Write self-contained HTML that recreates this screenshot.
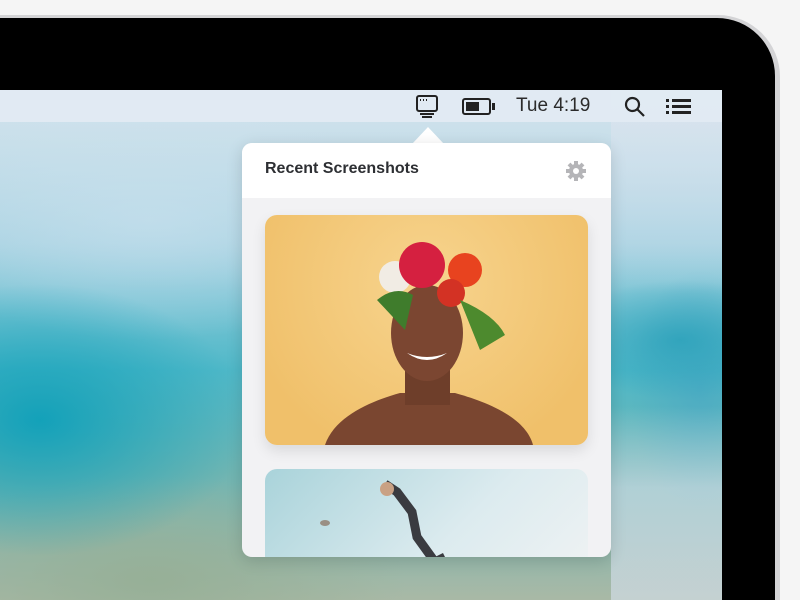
<!DOCTYPE html>
<html><head><meta charset="utf-8"><style>
*{margin:0;padding:0;box-sizing:border-box}
html,body{width:800px;height:600px;overflow:hidden}
body{background:#f5f5f5;position:relative;font-family:"Liberation Sans",sans-serif}
.rim{position:absolute;left:-40px;top:15px;width:820px;height:600px;border-radius:0 62px 0 0;background:#d4d4d6}
.bezel{position:absolute;left:-40px;top:18px;width:815px;height:600px;border-radius:0 58px 0 0;background:#000}
.screen{position:absolute;left:0;top:90px;width:722px;height:510px;overflow:hidden;
background:
radial-gradient(ellipse 120px 60px at 680px 250px,rgba(40,160,185,.8),transparent),
radial-gradient(ellipse 70px 120px at 700px 300px,rgba(70,165,195,.6),transparent),
radial-gradient(ellipse 260px 170px at 40px 330px,rgba(15,160,185,.95),transparent 80%),
radial-gradient(ellipse 320px 130px at 150px 490px,rgba(150,175,150,.95),transparent 80%),
radial-gradient(ellipse 260px 120px at 150px 130px,rgba(190,220,235,.8),transparent),
linear-gradient(180deg,#c4dce8 0%,#9fcfdf 30%,#4fb8c8 55%,#6fb5b2 75%,#a9b9a6 100%)}
.top{position:absolute;left:0;top:0;width:722px;height:200px;background:linear-gradient(180deg,rgba(220,232,240,.6),transparent)}
.right{position:absolute;left:611px;top:0;width:111px;height:510px;background:linear-gradient(180deg,rgba(225,230,240,.6) 0%,rgba(200,220,235,.3) 30%,transparent 40%,transparent 62%,rgba(215,225,238,.6) 78%)}
.menubar{position:absolute;left:0;top:0;width:722px;height:32px;background:rgba(225,234,243,.97)}
.time{position:absolute;left:516px;top:5px;font-size:19px;color:#2b2b2b}
.pop{position:absolute;left:242px;top:143px;width:369px;height:414px;border-radius:10px;background:#f2f2f4;overflow:hidden;box-shadow:0 4px 16px rgba(0,0,0,.15)}
.head{height:55px;background:#fff;position:relative}
.head span{position:absolute;left:23px;top:17px;font-size:16px;font-weight:bold;color:#2d2f33}
.arrow{position:absolute;left:412px;top:127px;width:0;height:0;border-left:16px solid transparent;border-right:16px solid transparent;border-bottom:17px solid #fff}
.img1{position:absolute;left:23px;top:72px;width:323px;height:230px;border-radius:12px;overflow:hidden;background:radial-gradient(ellipse at 50% 30%,#f7d48e,#f0c06a 80%);box-shadow:0 6px 14px rgba(0,0,0,.1)}
.img2{position:absolute;left:23px;top:326px;width:323px;height:100px;border-radius:12px;overflow:hidden;background:linear-gradient(135deg,#a9d3da,#dcebef 60%,#eef2f3)}
</style></head><body>
<div class="rim"></div><div class="bezel"></div>
<div class="screen"><div class="top"></div><div class="right"></div>
<div class="menubar">
<svg style="position:absolute;left:414px;top:4px" width="26" height="26" viewBox="0 0 26 26" fill="none" stroke="#222" stroke-width="2"><rect x="3" y="2" width="20" height="15" rx="2"/><path d="M6 6h1M9 6h1M12 6h1" stroke-width="2"/><path d="M6 20h14M8 23h10"/></svg>
<svg style="position:absolute;left:462px;top:8px" width="34" height="17" viewBox="0 0 34 17"><rect x="1" y="1" width="27" height="15" rx="2" fill="none" stroke="#222" stroke-width="2"/><rect x="4" y="4" width="13" height="9" fill="#222"/><rect x="30" y="5" width="3" height="7" fill="#222"/></svg>
<div class="time">Tue 4:19</div>
<svg style="position:absolute;left:624px;top:6px" width="22" height="22" viewBox="0 0 22 22" fill="none" stroke="#222" stroke-width="2.2"><circle cx="8.5" cy="8.5" r="6.5"/><path d="M13 13l7 7"/></svg>
<svg style="position:absolute;left:666px;top:8px" width="26" height="17" viewBox="0 0 26 17" fill="#222"><rect x="0" y="1" width="3" height="3"/><rect x="0" y="7" width="3" height="3"/><rect x="0" y="13" width="3" height="3"/><rect x="6" y="1" width="19" height="3"/><rect x="6" y="7" width="19" height="3"/><rect x="6" y="13" width="19" height="3"/></svg>
</div></div>
<div class="arrow"></div>
<div class="pop">
<div class="head"><span>Recent Screenshots</span>
<svg style="position:absolute;left:324px;top:18px" width="20" height="20" viewBox="0 0 20 20"><g fill="#b5b5b8"><circle cx="10" cy="10" r="7"/><g stroke="#b5b5b8" stroke-width="4"><path d="M10 0v20M0 10h20M3 3l14 14M17 3L3 17"/></g></g><circle cx="10" cy="10" r="3" fill="#fff"/></svg>
</div>
<div class="img1"><svg width="323" height="230" viewBox="0 0 323 230">
<path d="M60 230 C70 200 110 185 135 178 L190 178 C215 185 260 200 268 230Z" fill="#7a4630"/>
<rect x="140" y="150" width="45" height="40" fill="#6e3e2a"/>
<ellipse cx="162" cy="118" rx="36" ry="48" fill="#7b4631"/>
<path d="M142 138 Q162 152 182 138 Q162 146 142 138Z" fill="#fff"/>
<circle cx="130" cy="62" r="16" fill="#f1ece4"/>
<circle cx="157" cy="50" r="23" fill="#d52040"/>
<circle cx="200" cy="55" r="17" fill="#e8431f"/>
<circle cx="186" cy="78" r="14" fill="#d33224"/>
<path d="M112 85 Q130 70 148 80 L140 115 Z" fill="#3f7c2c"/>
<path d="M195 85 Q230 100 240 120 L215 135 Z" fill="#4d8a2e"/>
</svg></div>
<div class="img2"><svg width="323" height="100" viewBox="0 0 323 100">
<path d="M120 15 l12 8 l15 20 l5 25 l18 25 l10 -5" stroke="#3a3b40" stroke-width="9" fill="none"/>
<circle cx="122" cy="20" r="7" fill="#c9a184"/><ellipse cx="60" cy="54" rx="5" ry="3" fill="#9a8f84"/>
</svg></div>
</div>
</body></html>
